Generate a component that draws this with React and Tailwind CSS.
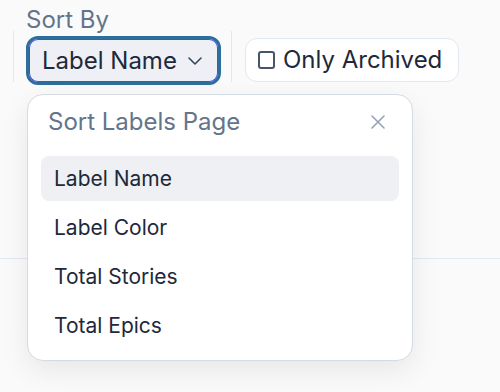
import React from 'react';

const OPTIONS = ['Label Name', 'Label Color', 'Total Stories', 'Total Epics'];

function Chevron() {
  return (
    <svg width="14" height="8" viewBox="0 0 14 8" fill="none" className="ml-[11px]">
      <path d="M1 1l6 6 6-6" stroke="#334155" strokeWidth="1.5" strokeLinecap="round" strokeLinejoin="round" />
    </svg>
  );
}

function CloseIcon() {
  return (
    <svg width="14" height="14" viewBox="0 0 14 14" fill="none">
      <path d="M1 1l12 12M13 1L1 13" stroke="#94a3b8" strokeWidth="1.6" strokeLinecap="round" />
    </svg>
  );
}

export default function App() {
  const selected = 'Label Name';

  return (
    <div className="relative h-[392px] w-[500px] overflow-hidden bg-[#fafafa] font-['Inter',sans-serif]">
      <div className="h-[259px] border-b border-[#e2e8f0]">
        <div className="flex items-start pl-[13px]">
          <div className="mt-[31px] h-[51px] w-px bg-[#e5e7eb]" />

          <div className="ml-[12px] flex flex-col">
            <span className="mt-[8px] text-[24px] leading-[24px] text-[#64748b]">Sort By</span>
            <button className="mt-[4px] flex h-[49px] w-[195px] items-center rounded-[12px] border-[3px] border-[#2d6e9c] bg-[#eef0f5] pl-[13px] shadow-[inset_0_0_0_1px_#4f46e5]">
              <span className="text-[24px] text-[#1e293b]">Label Name</span>
              <Chevron />
            </button>
          </div>

          <div className="ml-[10px] mt-[31px] h-[51px] w-px bg-[#e5e7eb]" />

          <label className="ml-[13px] mt-[38px] flex h-[44px] w-[214px] items-center rounded-[12px] border border-[#e2e8f0] bg-white pl-[12px]">
            <span className="h-[18px] w-[17px] shrink-0 rounded-[3px] border-2 border-[#475569] bg-white" />
            <span className="ml-[8px] text-[24px] text-[#1e293b]">Only Archived</span>
          </label>
        </div>
      </div>

      <div className="absolute left-[27px] top-[94px] h-[267px] w-[386px] rounded-[16px] border border-[#d5dbe2] bg-white shadow-[0_10px_28px_rgba(0,0,0,0.08)]">
        <div className="flex items-center justify-between pl-[20px] pr-[27px] pt-[13px]">
          <span className="text-[24px] leading-[28px] text-[#64748b]">Sort Labels Page</span>
          <CloseIcon />
        </div>
        <div className="mt-[20px] flex flex-col gap-[4px] px-[13px]">
          {OPTIONS.map(o => (
            <div
              key={o}
              className={`flex h-[45px] items-center rounded-[8px] pl-[13px] text-[21px] text-[#1e293b] ${o === selected ? 'bg-[#eef0f4]' : ''}`}
            >
              {o}
            </div>
          ))}
        </div>
      </div>
    </div>
  );
}
